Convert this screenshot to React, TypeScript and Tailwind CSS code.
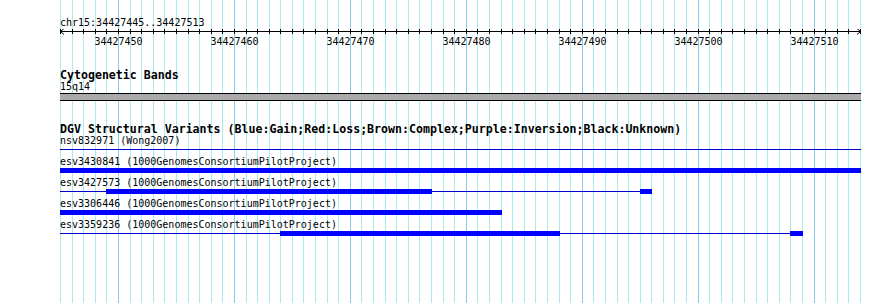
import React from 'react';

const LEFT = 60;
const SPAN = 800;
const BASES = 69;
const START = 34427445;
const WIDTH = 890;

const bx = (i: number) => Math.round(LEFT + (i * SPAN) / BASES);

type Part = { from: number; to: number; kind: 'bar' | 'line' };

interface Variant {
  name: string;
  parts: Part[];
}

const variants: Variant[] = [
  { name: 'esv3430841 (1000GenomesConsortiumPilotProject)', parts: [{ from: 60, to: 861, kind: 'bar' }] },
  {
    name: 'esv3427573 (1000GenomesConsortiumPilotProject)',
    parts: [
      { from: 60, to: 106, kind: 'line' },
      { from: 106, to: 432, kind: 'bar' },
      { from: 432, to: 640, kind: 'line' },
      { from: 640, to: 652, kind: 'bar' },
    ],
  },
  { name: 'esv3306446 (1000GenomesConsortiumPilotProject)', parts: [{ from: 60, to: 502, kind: 'bar' }] },
  {
    name: 'esv3359236 (1000GenomesConsortiumPilotProject)',
    parts: [
      { from: 60, to: 280, kind: 'line' },
      { from: 280, to: 560, kind: 'bar' },
      { from: 560, to: 790, kind: 'line' },
      { from: 790, to: 803, kind: 'bar' },
    ],
  },
];

const GridLines: React.FC = () => (
  <svg className="absolute inset-0 pointer-events-none" width={WIDTH} height={303}>
    {Array.from({ length: BASES + 1 }, (_, i) => {
      const x = bx(i) + 0.5;
      const major = (i + 5) % 10 === 0;
      return <line key={i} x1={x} x2={x} y1={0} y2={303} stroke={major ? '#84cdef' : '#a9ebef'} strokeWidth={1} />;
    })}
  </svg>
);

const Ruler: React.FC = () => (
  <svg width={WIDTH} height={21} className="block">
    <line x1={LEFT} x2={bx(BASES)} y1={2.5} y2={2.5} stroke="#000" strokeWidth={1} />
    <polyline points={`${LEFT + 4},-0.5 ${LEFT + 0.5},2.5 ${LEFT + 4},5.5`} fill="none" stroke="#000" strokeWidth={1} />
    <polyline points={`${bx(BASES) - 3},-0.5 ${bx(BASES) + 0.5},2.5 ${bx(BASES) - 3},5.5`} fill="none" stroke="#000" strokeWidth={1} />
    {Array.from({ length: BASES + 1 }, (_, i) => {
      const x = bx(i) + 0.5;
      return <line key={i} x1={x} x2={x} y1={0} y2={5} stroke="#000" strokeWidth={1} />;
    })}
    {Array.from({ length: 7 }, (_, k) => {
      const i = 5 + k * 10;
      return (
        <text
          key={i}
          x={bx(i) + 0.5}
          y={16}
          textAnchor="middle"
          fontFamily="'DejaVu Sans Mono', monospace"
          fontSize={10}
          fill="#000"
        >
          {START + i}
        </text>
      );
    })}
  </svg>
);

const Glyph: React.FC<{ parts: Part[] }> = ({ parts }) => (
  <svg width={WIDTH} height={5} className="block">
    {parts.map((p, idx) =>
      p.kind === 'bar' ? (
        <rect key={idx} x={p.from} y={0} width={p.to - p.from} height={5} fill="#0000ff" />
      ) : (
        <rect key={idx} x={p.from} y={2} width={p.to - p.from} height={1} fill="#0000cc" />
      )
    )}
  </svg>
);

export default function App() {
  return (
    <div className="relative w-[890px] h-[303px] overflow-hidden bg-white text-black font-['DejaVu_Sans_Mono',monospace]">
      <GridLines />
      <div className="relative flex flex-col pt-[16px]">
        <div className="pl-[60px] text-[10px] leading-[13px] h-[13px]">chr15:34427445..34427513</div>
        <Ruler />

        <div className="mt-[19px] pl-[60px] text-[11.6px] font-bold leading-[12px] h-[12px]">Cytogenetic Bands</div>
        <div className="pl-[60px] text-[10px] leading-[12px] h-[12px]">15q14</div>
        <div className="ml-[60px] w-[801px] h-[8px] bg-[#aaaaaa] border-y border-black" />

        <div className="mt-[22px] pl-[60px] text-[11.6px] font-bold leading-[12px] h-[12px] whitespace-nowrap">
          DGV Structural Variants (Blue:Gain;Red:Loss;Brown:Complex;Purple:Inversion;Black:Unknown)
        </div>
        <div className="pl-[60px] text-[10px] leading-[12px] h-[12px]">nsv832971 (Wong2007)</div>
        <div className="h-[3px] flex flex-col justify-end">
          <div className="ml-[60px] w-[801px] h-[1px] bg-[#0000cc]" />
        </div>

        <div className="mt-[6px] flex flex-col gap-[4px]">
          {variants.map((v) => (
            <div key={v.name} className="flex flex-col">
              <div className="pl-[60px] text-[10px] leading-[12px] h-[12px] whitespace-nowrap">{v.name}</div>
              <Glyph parts={v.parts} />
            </div>
          ))}
        </div>
      </div>
    </div>
  );
}
